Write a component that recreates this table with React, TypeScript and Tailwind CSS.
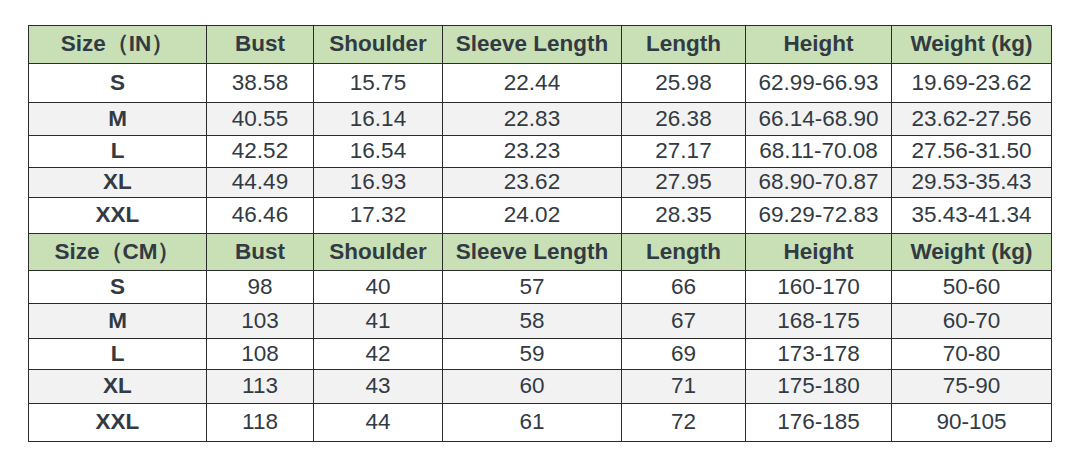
const head = ['Bust', 'Shoulder', 'Sleeve Length', 'Length', 'Height', 'Weight (kg)'];

const inch = [
  { size: 'S', h: 'h-[39px]', vals: ['38.58', '15.75', '22.44', '25.98', '62.99-66.93', '19.69-23.62'] },
  { size: 'M', h: 'h-[33px]', vals: ['40.55', '16.14', '22.83', '26.38', '66.14-68.90', '23.62-27.56'] },
  { size: 'L', h: 'h-[32px]', vals: ['42.52', '16.54', '23.23', '27.17', '68.11-70.08', '27.56-31.50'] },
  { size: 'XL', h: 'h-[30px]', vals: ['44.49', '16.93', '23.62', '27.95', '68.90-70.87', '29.53-35.43'] },
  { size: 'XXL', h: 'h-[36px]', vals: ['46.46', '17.32', '24.02', '28.35', '69.29-72.83', '35.43-41.34'] },
];

const cm = [
  { size: 'S', h: 'h-[33px]', vals: ['98', '40', '57', '66', '160-170', '50-60'] },
  { size: 'M', h: 'h-[35px]', vals: ['103', '41', '58', '67', '168-175', '60-70'] },
  { size: 'L', h: 'h-[31px]', vals: ['108', '42', '59', '69', '173-178', '70-80'] },
  { size: 'XL', h: 'h-[34px]', vals: ['113', '43', '60', '71', '175-180', '75-90'] },
  { size: 'XXL', h: 'h-[38px]', vals: ['118', '44', '61', '72', '176-185', '90-105'] },
];

const cell = 'border-[1.5px] border-[#2b2b2b] text-center p-0 leading-none';

function HeadRow({ label, h }: { label: string; h: string }) {
  return (
    <tr className={`${h} bg-[#c9e0b6]`}>
      <th className={`${cell} font-bold`}>{label}</th>
      {head.map((t) => (
        <th key={t} className={`${cell} font-bold`}>{t}</th>
      ))}
    </tr>
  );
}

function Rows({ rows }: { rows: typeof inch }) {
  return (
    <>
      {rows.map((r, i) => (
        <tr key={r.size} className={`${r.h} ${i % 2 === 1 ? 'bg-[#f2f2f2]' : 'bg-white'}`}>
          <td className={`${cell} font-bold`}>{r.size}</td>
          {r.vals.map((v, j) => (
            <td key={j} className={cell}>{v}</td>
          ))}
        </tr>
      ))}
    </>
  );
}

export default function App() {
  return (
    <div className="w-[1080px] h-[466px] bg-white pt-[25px] pl-[28px]" style={{ fontFamily: '"Liberation Sans", Arial, sans-serif' }}>
      <table className="table-fixed border-collapse w-[1022px] text-[22.5px] text-[#323a43]">
        <colgroup>
          <col className="w-[178px]" />
          <col className="w-[107px]" />
          <col className="w-[129px]" />
          <col className="w-[179px]" />
          <col className="w-[124px]" />
          <col className="w-[146px]" />
          <col className="w-[160px]" />
        </colgroup>
        <tbody>
          <HeadRow label="Size（IN）" h="h-[38px]" />
          <Rows rows={inch} />
          <HeadRow label="Size（CM）" h="h-[37px]" />
          <Rows rows={cm} />
        </tbody>
      </table>
    </div>
  );
}
